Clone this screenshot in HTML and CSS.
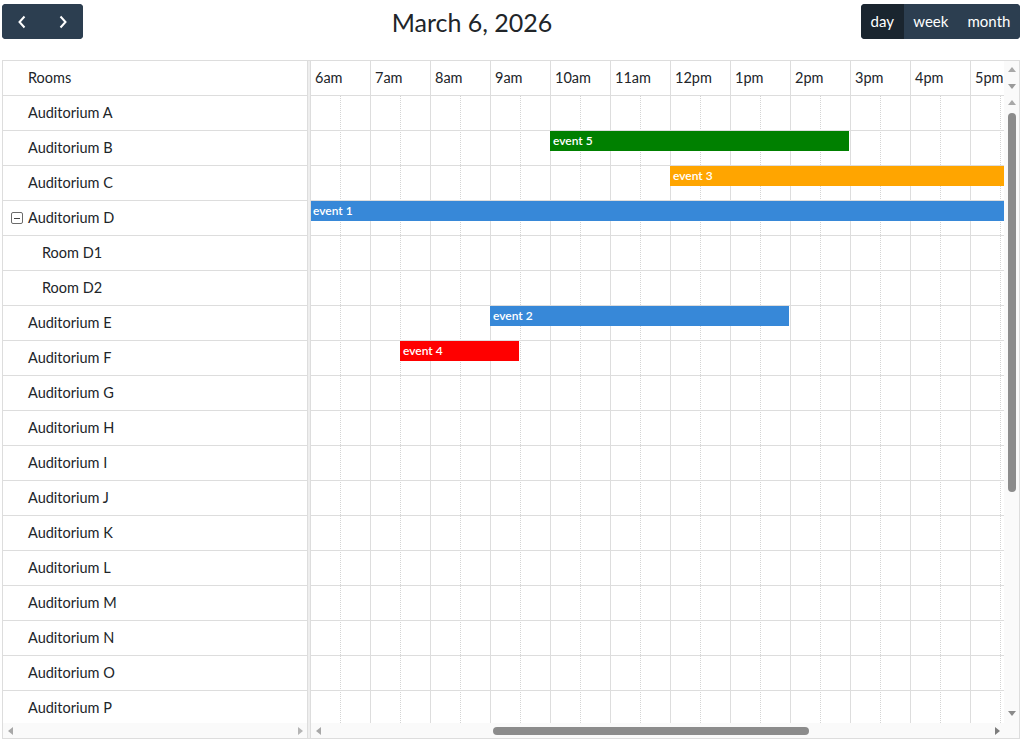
FILE: index.html
```html
<!DOCTYPE html>
<html lang="en">
<head>
<meta charset="utf-8">
<title>Resource Timeline</title>
<link rel="stylesheet" href="styles.css">
</head>
<body>
<div class="cal">
  <div class="toolbar">
    <div class="btn-group">
      <button class="btn icon-btn" aria-label="prev">
        <svg width="10" height="14" viewBox="0 0 10 14"><path d="M7.5 1.5 L2.5 7 L7.5 12.5" fill="none" stroke="#fff" stroke-width="2"/></svg>
      </button>
      <button class="btn icon-btn" aria-label="next">
        <svg width="10" height="14" viewBox="0 0 10 14"><path d="M2.5 1.5 L7.5 7 L2.5 12.5" fill="none" stroke="#fff" stroke-width="2"/></svg>
      </button>
    </div>
    <h2 class="title">March 6, 2026</h2>
    <div class="btn-group">
      <button class="btn active">day</button>
      <button class="btn">week</button>
      <button class="btn">month</button>
    </div>
  </div>

  <div class="grid">
    <div class="left">
      <div class="lhead"><span class="cell-text">Rooms</span></div>
      <div class="lbody">
        <div class="lrow"><span class="cell-text">Auditorium A</span></div>
        <div class="lrow"><span class="cell-text">Auditorium B</span></div>
        <div class="lrow"><span class="cell-text">Auditorium C</span></div>
        <div class="lrow has-exp">
          <svg class="exp" width="12" height="12" viewBox="0 0 12 12"><rect x="0.5" y="0.5" width="11" height="11" rx="1.5" fill="none" stroke="#6b6b6b"/><path d="M3 6.5 H9" stroke="#444" stroke-width="1"/></svg>
          <span class="cell-text">Auditorium D</span>
        </div>
        <div class="lrow child"><span class="cell-text">Room D1</span></div>
        <div class="lrow child"><span class="cell-text">Room D2</span></div>
        <div class="lrow"><span class="cell-text">Auditorium E</span></div>
        <div class="lrow"><span class="cell-text">Auditorium F</span></div>
        <div class="lrow"><span class="cell-text">Auditorium G</span></div>
        <div class="lrow"><span class="cell-text">Auditorium H</span></div>
        <div class="lrow"><span class="cell-text">Auditorium I</span></div>
        <div class="lrow"><span class="cell-text">Auditorium J</span></div>
        <div class="lrow"><span class="cell-text">Auditorium K</span></div>
        <div class="lrow"><span class="cell-text">Auditorium L</span></div>
        <div class="lrow"><span class="cell-text">Auditorium M</span></div>
        <div class="lrow"><span class="cell-text">Auditorium N</span></div>
        <div class="lrow"><span class="cell-text">Auditorium O</span></div>
        <div class="lrow"><span class="cell-text">Auditorium P</span></div>
        <div class="lrow"><span class="cell-text">Auditorium Q</span></div>
      </div>
      <div class="hsb">
        <span class="arrow"><svg width="6" height="8" viewBox="0 0 6 8"><path d="M5 0 V8 L0 4 Z" fill="#a8a8a8"/></svg></span>
        <span class="hsb-track"></span>
        <span class="arrow"><svg width="6" height="8" viewBox="0 0 6 8"><path d="M1 0 V8 L6 4 Z" fill="#b5b5b5"/></svg></span>
      </div>
    </div>

    <div class="divider"></div>

    <div class="right">
      <div class="rhead">
        <div class="hclip">
          <div class="hrow">
            <div class="hcell">12am</div><div class="hcell">1am</div><div class="hcell">2am</div><div class="hcell">3am</div>
            <div class="hcell">4am</div><div class="hcell">5am</div><div class="hcell">6am</div><div class="hcell">7am</div>
            <div class="hcell">8am</div><div class="hcell">9am</div><div class="hcell">10am</div><div class="hcell">11am</div>
            <div class="hcell">12pm</div><div class="hcell">1pm</div><div class="hcell">2pm</div><div class="hcell">3pm</div>
            <div class="hcell">4pm</div><div class="hcell">5pm</div><div class="hcell">6pm</div><div class="hcell">7pm</div>
            <div class="hcell">8pm</div><div class="hcell">9pm</div><div class="hcell">10pm</div><div class="hcell">11pm</div>
          </div>
        </div>
        <div class="vsb-small">
          <span class="varrow"><svg width="8" height="6" viewBox="0 0 8 6"><path d="M0 5 H8 L4 0 Z" fill="#a8a8a8"/></svg></span>
          <span class="varrow"><svg width="8" height="6" viewBox="0 0 8 6"><path d="M0 1 H8 L4 6 Z" fill="#9a9a9a"/></svg></span>
        </div>
      </div>

      <div class="rbody">
        <div class="bclip">
          <div class="canvas">
            <div class="slots">
              <div class="slot first"></div><div class="slot"></div><div class="slot"></div><div class="slot"></div>
              <div class="slot"></div><div class="slot"></div><div class="slot"></div><div class="slot"></div>
              <div class="slot"></div><div class="slot"></div><div class="slot"></div><div class="slot"></div>
              <div class="slot"></div><div class="slot"></div><div class="slot"></div><div class="slot"></div>
              <div class="slot"></div><div class="slot"></div><div class="slot"></div><div class="slot"></div>
              <div class="slot"></div><div class="slot"></div><div class="slot"></div><div class="slot"></div>
            </div>
            <div class="trows">
              <div class="trow"></div>
              <div class="trow"><div class="event ev-green" style="left:600px;width:299px">event 5</div></div>
              <div class="trow"><div class="event ev-orange" style="left:720px;width:480px">event 3</div></div>
              <div class="trow"><div class="event ev-blue" style="left:360px;width:840px">event 1</div></div>
              <div class="trow"></div>
              <div class="trow"></div>
              <div class="trow"><div class="event ev-blue" style="left:540px;width:299px">event 2</div></div>
              <div class="trow"><div class="event ev-red" style="left:450px;width:119px">event 4</div></div>
              <div class="trow"></div><div class="trow"></div><div class="trow"></div><div class="trow"></div>
              <div class="trow"></div><div class="trow"></div><div class="trow"></div><div class="trow"></div>
              <div class="trow"></div><div class="trow"></div><div class="trow"></div>
            </div>
          </div>
        </div>
        <div class="vsb">
          <span class="varrow top"><svg width="8" height="6" viewBox="0 0 8 6"><path d="M0 5 H8 L4 0 Z" fill="#a8a8a8"/></svg></span>
          <span class="vsb-track"><span class="vthumb"></span></span>
          <span class="varrow bottom"><svg width="8" height="6" viewBox="0 0 8 6"><path d="M0 1 H8 L4 6 Z" fill="#8a8a8a"/></svg></span>
        </div>
      </div>

      <div class="rfoot">
        <div class="hsb">
          <span class="arrow"><svg width="6" height="8" viewBox="0 0 6 8"><path d="M5 0 V8 L0 4 Z" fill="#a8a8a8"/></svg></span>
          <span class="hsb-track"><span class="hthumb"></span></span>
          <span class="arrow"><svg width="6" height="8" viewBox="0 0 6 8"><path d="M1 0 V8 L6 4 Z" fill="#7d7d7d"/></svg></span>
        </div>
        <div class="corner"></div>
      </div>
    </div>
  </div>
</div>
</body>
</html>
```

FILE: styles.css
```css
* { box-sizing: border-box; }

html, body {
  margin: 0;
  padding: 0;
  background: #fff;
}

body {
  font-family: "Lato", "Open Sans", sans-serif;
  font-size: 14.5px;
  color: #212529;
}

.cal {
  padding: 4px 1px 0 2px;
}

/* ---------- toolbar ---------- */
.toolbar {
  display: flex;
  justify-content: space-between;
  align-items: center;
  height: 35px;
  margin-bottom: 21px;
}

.title {
  margin: 0;
  font-size: 25px;
  font-weight: 400;
  color: #212529;
}

.btn-group {
  display: flex;
  height: 35px;
  border-radius: 4px;
  overflow: hidden;
  background: #2c3e50;
}

.btn {
  border: 0;
  margin: 0;
  background: #2c3e50;
  color: #fff;
  font-family: inherit;
  font-size: 15px;
  padding: 0 9.6px;
  height: 35px;
  line-height: 35px;
  cursor: pointer;
}

.btn.active {
  background: #1a252f;
}

.icon-btn {
  width: 40.5px;
  padding: 0;
  display: flex;
  align-items: center;
  justify-content: center;
}

.icon-btn svg { display: block; }

/* ---------- grid ---------- */
.grid {
  display: flex;
  border: 1px solid #ddd;
  height: 679px;
}

.left {
  width: 304px;
  flex: none;
  display: flex;
  flex-direction: column;
}

.lhead {
  height: 35px;
  border-bottom: 1px solid #ddd;
  display: flex;
  align-items: center;
  padding-left: 25px;
  padding-bottom: 1px;
  flex: none;
}

.lbody {
  height: 627px;
  flex: none;
  overflow: hidden;
}

.lrow {
  height: 35px;
  border-bottom: 1px solid #ddd;
  display: flex;
  align-items: center;
  padding-left: 25px;
  padding-bottom: 1px;
  white-space: nowrap;
}

.lrow.has-exp { padding-left: 8px; }

.lrow.has-exp .exp {
  margin-right: 5px;
  flex: none;
}

.lrow.child { padding-left: 39px; }

.divider {
  flex: none;
  width: 4px;
  border-left: 1px solid #ddd;
  border-right: 1px solid #ddd;
  background: #eee;
}

.right {
  flex: 1;
  min-width: 0;
  display: flex;
  flex-direction: column;
}

.rhead {
  height: 35px;
  flex: none;
  display: flex;
}

.hclip {
  flex: 1;
  min-width: 0;
  overflow: hidden;
}

.hrow {
  display: flex;
  width: 1440px;
  margin-left: -361px;
}

.hcell {
  width: 60px;
  flex: none;
  height: 35px;
  border-left: 1px solid #ddd;
  border-bottom: 1px solid #ddd;
  padding-left: 4px;
  padding-bottom: 1px;
  display: flex;
  align-items: center;
  white-space: nowrap;
}

.hcell:first-child { border-left: 0; }

.rbody {
  height: 627px;
  flex: none;
  display: flex;
}

.bclip {
  flex: 1;
  min-width: 0;
  overflow: hidden;
}

.canvas {
  position: relative;
  width: 1440px;
  margin-left: -361px;
}

.slots {
  position: absolute;
  top: 0;
  left: 0;
  bottom: 0;
  width: 1440px;
  display: flex;
}

.slot {
  position: relative;
  width: 60px;
  flex: none;
  border-left: 1px solid #ddd;
}

.slot.first { border-left: 0; }

.slot::after {
  content: "";
  position: absolute;
  top: 0;
  bottom: 0;
  left: 29px;
  border-left: 1px dotted #d4d4d4;
}

.trows { position: relative; }

.trow {
  position: relative;
  height: 35px;
  border-bottom: 1px solid #ddd;
}

.event {
  position: absolute;
  top: 0;
  height: 20px;
  line-height: 20px;
  padding: 0 3px;
  color: #fff;
  font-size: 12px;
  font-weight: 600;
  white-space: nowrap;
  overflow: hidden;
}

.ev-blue { background: #3788d8; }
.ev-green { background: #008000; }
.ev-orange { background: #ffa500; }
.ev-red { background: #ff0000; }

/* ---------- drawn scrollbars ---------- */
.hsb {
  height: 15px;
  flex: 1;
  min-width: 0;
  display: flex;
  align-items: center;
  background: #fafafa;
}

.left .hsb { flex: none; }

.arrow {
  width: 15px;
  height: 15px;
  flex: none;
  display: flex;
  align-items: center;
  justify-content: center;
}

.arrow svg, .varrow svg { display: block; }

.hsb-track {
  flex: 1;
  height: 15px;
  display: flex;
  align-items: center;
}

.hthumb {
  margin-left: 167px;
  width: 316px;
  height: 8px;
  border-radius: 4px;
  background: #8c8c8c;
}

.rfoot {
  height: 15px;
  flex: none;
  display: flex;
}

.corner {
  width: 15px;
  flex: none;
  background: #fafafa;
}

.vsb-small {
  width: 15px;
  flex: none;
  display: flex;
  flex-direction: column;
  justify-content: space-between;
  padding: 3px 0 4px;
  background: #fafafa;
}

.varrow {
  width: 15px;
  height: 12px;
  flex: none;
  display: flex;
  align-items: center;
  justify-content: center;
}

.vsb {
  width: 15px;
  flex: none;
  display: flex;
  flex-direction: column;
  background: #fafafa;
}

.varrow.top { height: 14px; }
.varrow.bottom { height: 20px; }

.vsb-track {
  flex: 1;
  display: flex;
  flex-direction: column;
  align-items: center;
  padding-top: 3px;
}

.vthumb {
  width: 8px;
  height: 379px;
  border-radius: 4px;
  background: #8c8c8c;
}
```
